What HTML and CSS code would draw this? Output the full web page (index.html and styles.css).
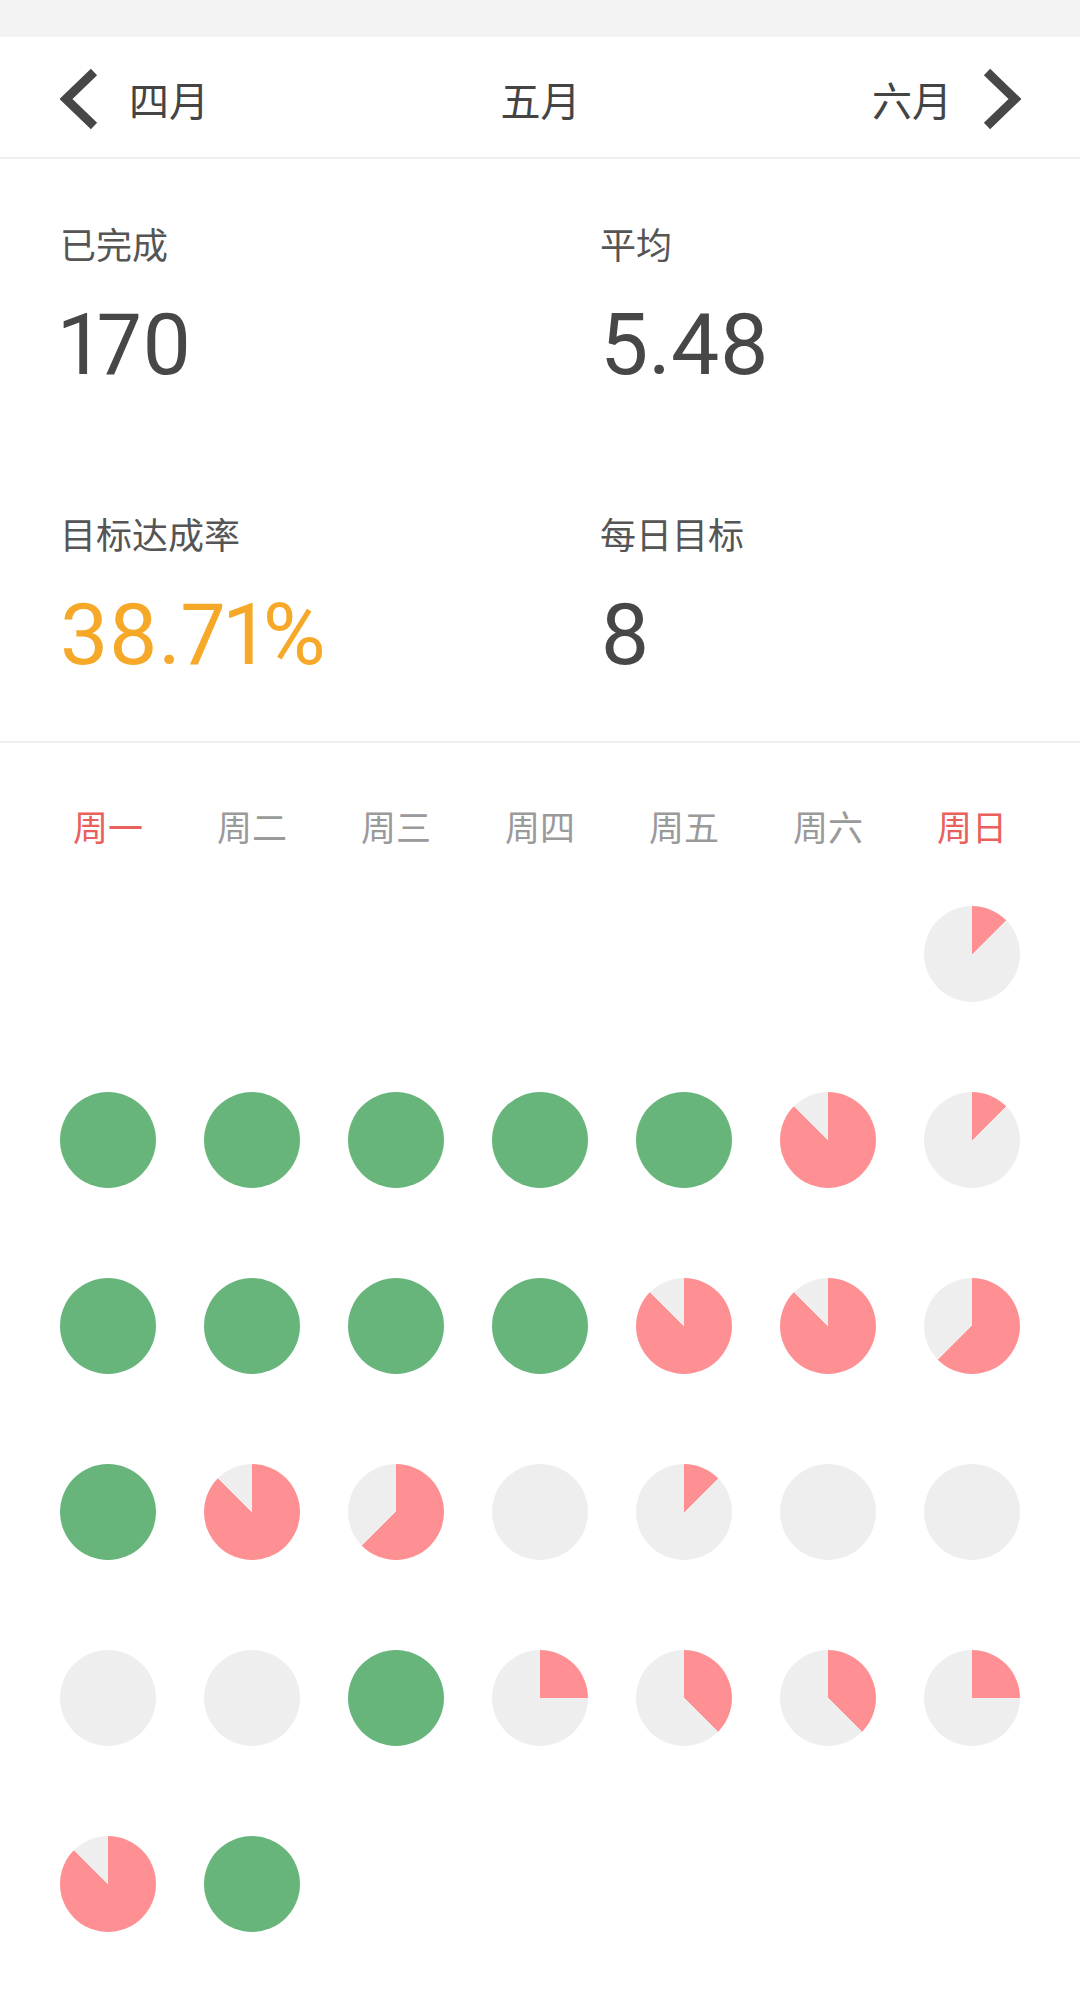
FILE: index.html
```html
<!DOCTYPE html>
<html lang="zh-CN">
<head>
<meta charset="utf-8">
<title>五月</title>
<link rel="stylesheet" href="styles.css">
</head>
<body>
<div class="topbar"></div>
<header class="monthnav">
  <div class="nav-prev">
    <svg class="chev" width="40" height="64" viewBox="0 0 40 64"><polyline points="34,5 6,32 34,59" /></svg>
    <span class="nav-label">四月</span>
  </div>
  <div class="nav-current">五月</div>
  <div class="nav-next">
    <span class="nav-label">六月</span>
    <svg class="chev" width="40" height="64" viewBox="0 0 40 64"><polyline points="6,5 34,32 6,59" /></svg>
  </div>
</header>
<section class="stats">
  <div class="stat">
    <div class="stat-label">已完成</div>
    <div class="stat-value">170</div>
  </div>
  <div class="stat">
    <div class="stat-label">平均</div>
    <div class="stat-value">5.48</div>
  </div>
  <div class="stat">
    <div class="stat-label">目标达成率</div>
    <div class="stat-value accent">38.71%</div>
  </div>
  <div class="stat">
    <div class="stat-label">每日目标</div>
    <div class="stat-value">8</div>
  </div>
</section>
<section class="calendar">
  <div class="weekdays">
    <div class="weekday weekend">周一</div>
    <div class="weekday">周二</div>
    <div class="weekday">周三</div>
    <div class="weekday">周四</div>
    <div class="weekday">周五</div>
    <div class="weekday">周六</div>
    <div class="weekday weekend">周日</div>
  </div>
  <div class="days">
    <div class="day"></div>
    <div class="day"></div>
    <div class="day"></div>
    <div class="day"></div>
    <div class="day"></div>
    <div class="day"></div>
    <div class="day"><div class="pie" style="--p:45deg"></div></div>

    <div class="day"><div class="pie done"></div></div>
    <div class="day"><div class="pie done"></div></div>
    <div class="day"><div class="pie done"></div></div>
    <div class="day"><div class="pie done"></div></div>
    <div class="day"><div class="pie done"></div></div>
    <div class="day"><div class="pie" style="--p:315deg"></div></div>
    <div class="day"><div class="pie" style="--p:45deg"></div></div>

    <div class="day"><div class="pie done"></div></div>
    <div class="day"><div class="pie done"></div></div>
    <div class="day"><div class="pie done"></div></div>
    <div class="day"><div class="pie done"></div></div>
    <div class="day"><div class="pie" style="--p:315deg"></div></div>
    <div class="day"><div class="pie" style="--p:315deg"></div></div>
    <div class="day"><div class="pie" style="--p:225deg"></div></div>

    <div class="day"><div class="pie done"></div></div>
    <div class="day"><div class="pie" style="--p:315deg"></div></div>
    <div class="day"><div class="pie" style="--p:225deg"></div></div>
    <div class="day"><div class="pie" style="--p:0deg"></div></div>
    <div class="day"><div class="pie" style="--p:45deg"></div></div>
    <div class="day"><div class="pie" style="--p:0deg"></div></div>
    <div class="day"><div class="pie" style="--p:0deg"></div></div>

    <div class="day"><div class="pie" style="--p:0deg"></div></div>
    <div class="day"><div class="pie" style="--p:0deg"></div></div>
    <div class="day"><div class="pie done"></div></div>
    <div class="day"><div class="pie" style="--p:90deg"></div></div>
    <div class="day"><div class="pie" style="--p:135deg"></div></div>
    <div class="day"><div class="pie" style="--p:135deg"></div></div>
    <div class="day"><div class="pie" style="--p:90deg"></div></div>

    <div class="day"><div class="pie" style="--p:315deg"></div></div>
    <div class="day"><div class="pie done"></div></div>
  </div>
</section>
</body>
</html>
```

FILE: styles.css
```css
html, body {
  margin: 0;
  padding: 0;
  background: #ffffff;
}

body {
  font-family: Roboto, "Noto Sans CJK SC", sans-serif;
  color: #444444;
  width: 1080px;
}

.topbar {
  height: 37px;
  background: #f3f3f3;
}

.monthnav {
  height: 117px;
  padding: 3px 59px 0 60px;
  border-bottom: 2px solid #efefef;
  display: grid;
  grid-template-columns: 1fr auto 1fr;
  align-items: center;
  font-family: "Noto Sans CJK SC", sans-serif;
  font-size: 40px;
  line-height: 50px;
  color: #444444;
}

.nav-prev {
  display: flex;
  align-items: center;
  gap: 29px;
  justify-self: start;
}

.nav-next {
  display: flex;
  align-items: center;
  gap: 29px;
  justify-self: end;
}

.nav-current {
  justify-self: center;
}

.chev {
  display: block;
}

.chev polyline {
  fill: none;
  stroke: #474747;
  stroke-width: 9;
  stroke-linecap: butt;
  stroke-linejoin: miter;
}

.stats {
  display: grid;
  grid-template-columns: 1fr 1fr;
  row-gap: 114px;
  padding: 60px 0 56px;
  border-bottom: 2px solid #efefef;
}

.stat {
  padding-left: 60px;
}

.stat-label {
  font-family: "Noto Sans CJK SC", sans-serif;
  font-size: 36px;
  line-height: 48px;
  color: #555555;
}

.stat-value {
  margin-top: 28px;
  font-family: Roboto, sans-serif;
  font-size: 86px;
  line-height: 100px;
  color: #474747;
  font-variant-numeric: proportional-nums;
}

.stat-value.accent {
  color: #f6a929;
}

.calendar {
  padding: 51px 36px 0;
}

.weekdays {
  display: grid;
  grid-template-columns: repeat(7, 144px);
  height: 67px;
}

.weekday {
  text-align: center;
  font-family: "Noto Sans CJK SC", sans-serif;
  font-size: 35px;
  line-height: 64px;
  color: #9a9a9a;
}

.weekday.weekend {
  color: #ea605c;
}

.days {
  display: grid;
  grid-template-columns: repeat(7, 144px);
  grid-auto-rows: 186px;
}

.day {
  display: flex;
  align-items: center;
  justify-content: center;
}

.pie {
  width: 96px;
  height: 96px;
  border-radius: 50%;
  background: conic-gradient(#fe8f93 0 var(--p), #eeeeee var(--p) 360deg);
}

.pie.done {
  background: #68b57c;
}
```
